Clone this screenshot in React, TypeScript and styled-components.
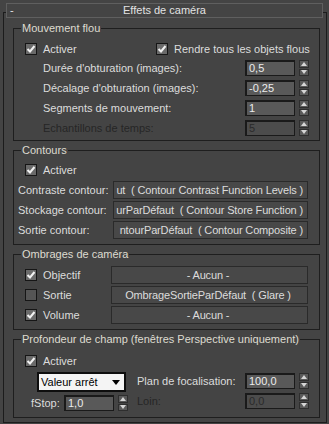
import React from "react";
import styled, { createGlobalStyle } from "styled-components";

const GlobalStyle = createGlobalStyle`
  html, body {
    margin: 0;
    padding: 0;
    background: #444444;
  }
  body {
    font-family: "Liberation Sans", Arial, sans-serif;
    font-size: 11px;
    color: #dcdcdc;
  }
`;

const Check: React.FC<{ checked?: boolean }> = ({ checked }) => (
  <CheckBox $checked={checked}>
    {checked && (
      <svg width="10" height="10" viewBox="0 0 10 10">
        <polyline points="1.5,5 4,7.5 8.5,2" fill="none" stroke="#f2f2f2" strokeWidth="2" />
      </svg>
    )}
  </CheckBox>
);

const Spinner: React.FC = () => (
  <SpinBox>
    <SpinHalf>
      <svg width="6" height="4" viewBox="0 0 6 4">
        <polygon points="0,4 6,4 3,0" fill="#d6d6d6" />
      </svg>
    </SpinHalf>
    <SpinHalf>
      <svg width="6" height="4" viewBox="0 0 6 4">
        <polygon points="0,0 6,0 3,4" fill="#d6d6d6" />
      </svg>
    </SpinHalf>
  </SpinBox>
);

const SpinField: React.FC<{ value: string; disabled?: boolean }> = ({ value, disabled }) => (
  <>
    <NumField $disabled={disabled}>{value}</NumField>
    <Spinner />
  </>
);

const App: React.FC = () => {
  return (
    <Page>
      <GlobalStyle />
      <Frame>
        <Header>
          <Collapse>-</Collapse>
          <span>Effets de caméra</span>
          <span />
        </Header>

        <Group $top={3}>
          <Legend>Mouvement flou</Legend>
          <GroupBody $top={4} $bottom={2}>
            <CheckRow $h={19}>
              <CheckItem $w={131}>
                <Check checked />
                Activer
              </CheckItem>
              <CheckItem>
                <Check checked />
                Rendre tous les objets flous
              </CheckItem>
            </CheckRow>
            <SpinRow>
              <Label>Durée d'obturation (images):</Label>
              <SpinField value="0,5" />
            </SpinRow>
            <SpinRow>
              <Label>Décalage d'obturation (images):</Label>
              <SpinField value="-0,25" />
            </SpinRow>
            <SpinRow>
              <Label>Segments de mouvement:</Label>
              <SpinField value="1" />
            </SpinRow>
            <SpinRow>
              <Label $disabled>Echantillons de temps:</Label>
              <SpinField value="5" disabled />
            </SpinRow>
          </GroupBody>
        </Group>

        <Group $top={2}>
          <Legend>Contours</Legend>
          <GroupBody $top={3} $bottom={4}>
            <CheckRow $h={20}>
              <CheckItem>
                <Check checked />
                Activer
              </CheckItem>
            </CheckRow>
            <MapRow $left={4}>
              <MapLabel $w={95}>Contraste contour:</MapLabel>
              <MapButton $align="flex-end">ut  ( Contour Contrast Function Levels )</MapButton>
            </MapRow>
            <MapRow $left={4}>
              <MapLabel $w={95}>Stockage contour:</MapLabel>
              <MapButton $align="flex-end">urParDéfaut  ( Contour Store Function )</MapButton>
            </MapRow>
            <MapRow $left={4}>
              <MapLabel $w={95}>Sortie contour:</MapLabel>
              <MapButton $align="flex-end">ntourParDéfaut  ( Contour Composite )</MapButton>
            </MapRow>
          </GroupBody>
        </Group>

        <Group $top={2}>
          <Legend>Ombrages de caméra</Legend>
          <GroupBody $top={4} $bottom={4}>
            <MapRow $left={11}>
              <CheckItem $w={86}>
                <Check checked />
                Objectif
              </CheckItem>
              <MapButton $align="center">- Aucun -</MapButton>
            </MapRow>
            <MapRow $left={11}>
              <CheckItem $w={86}>
                <Check />
                Sortie
              </CheckItem>
              <MapButton $align="center">OmbrageSortieParDéfaut  ( Glare )</MapButton>
            </MapRow>
            <MapRow $left={11}>
              <CheckItem $w={86}>
                <Check checked />
                Volume
              </CheckItem>
              <MapButton $align="center">- Aucun -</MapButton>
            </MapRow>
          </GroupBody>
        </Group>

        <Group $top={2}>
          <Legend>Profondeur de champ (fenêtres Perspective uniquement)</Legend>
          <GroupBody $top={5} $bottom={6}>
            <CheckRow $h={20}>
              <CheckItem>
                <Check checked />
                Activer
              </CheckItem>
            </CheckRow>
            <DofArea>
              <DofLeft>
                <Dropdown>
                  <span>Valeur arrêt</span>
                  <svg width="8" height="5" viewBox="0 0 8 5">
                    <polygon points="0,0 8,0 4,5" fill="#000" />
                  </svg>
                </Dropdown>
                <FieldRow $top={3}>
                  <SmallLabel>fStop:</SmallLabel>
                  <SpinField value="1,0" />
                </FieldRow>
              </DofLeft>
              <DofRight>
                <FieldRow $top={2}>
                  <Label>Plan de focalisation:</Label>
                  <SpinField value="100,0" />
                </FieldRow>
                <FieldRow $top={4}>
                  <Label $disabled>Loin:</Label>
                  <SpinField value="0,0" disabled />
                </FieldRow>
              </DofRight>
            </DofArea>
          </GroupBody>
        </Group>
      </Frame>
    </Page>
  );
};

export default App;

const Page = styled.div`
  width: 329px;
  height: 424px;
  padding-top: 12px;
  box-sizing: border-box;
  background: #444444;
  overflow: hidden;
`;

const Frame = styled.div`
  margin-left: 3px;
  width: 324px;
  box-sizing: border-box;
  border: 1px solid #1c1c1c;
  padding-bottom: 4px;
`;

const Header = styled.div`
  margin: -10px 3px 0 2px;
  height: 15px;
  box-sizing: border-box;
  border: 1px solid #5f5f5f;
  background: #444444;
  display: grid;
  grid-template-columns: 1fr auto 1fr;
  align-items: center;
  line-height: 13px;
  color: #e2e2e2;
`;

const Collapse = styled.span`
  padding-left: 3px;
`;

const Group = styled.fieldset<{ $top: number }>`
  margin: ${(p) => p.$top}px 6px 0 9px;
  padding: 0;
  border: 1px solid #1e1e1e;
  min-width: 0;
`;

const Legend = styled.legend`
  margin-left: 7px;
  padding: 0 1px;
  line-height: 14px;
  color: #dedbd0;
  white-space: nowrap;
`;

const GroupBody = styled.div<{ $top: number; $bottom: number }>`
  padding: ${(p) => p.$top}px 0 ${(p) => p.$bottom}px 0;
`;

const CheckRow = styled.div<{ $h: number }>`
  height: ${(p) => p.$h}px;
  display: flex;
  align-items: center;
  padding-left: 11px;
`;

const CheckItem = styled.div<{ $w?: number }>`
  display: flex;
  align-items: center;
  gap: 6px;
  flex: none;
  width: ${(p) => (p.$w ? `${p.$w}px` : "auto")};
  white-space: nowrap;
`;

const CheckBox = styled.span<{ $checked?: boolean }>`
  width: 12px;
  height: 12px;
  box-sizing: border-box;
  border: 1px solid #161616;
  background: ${(p) => (p.$checked ? "#6a6a6a" : "#555555")};
  display: flex;
  align-items: center;
  justify-content: center;
`;

const SpinRow = styled.div`
  height: 20px;
  display: flex;
  align-items: center;
  padding: 0 10px 0 29px;
`;

const Label = styled.span<{ $disabled?: boolean }>`
  flex: 1;
  white-space: nowrap;
  color: ${(p) => (p.$disabled ? "#262626" : "#dcdcdc")};
`;

const NumField = styled.div<{ $disabled?: boolean }>`
  width: 50px;
  height: 16px;
  box-sizing: border-box;
  border: 1px solid #1a1a1a;
  border-top-width: 2px;
  border-left-width: 2px;
  background: ${(p) => (p.$disabled ? "#4c4c4c" : "#595959")};
  color: ${(p) => (p.$disabled ? "#2a2a2a" : "#ececec")};
  padding-left: 2px;
  line-height: 13px;
  flex: none;
`;

const SpinBox = styled.div`
  margin-left: 4px;
  width: 10px;
  height: 16px;
  display: flex;
  flex-direction: column;
  gap: 1px;
  flex: none;
`;

const SpinHalf = styled.div`
  flex: 1;
  box-sizing: border-box;
  background: #5a5a5a;
  border: 1px solid #2e2e2e;
  display: flex;
  align-items: center;
  justify-content: center;
`;

const MapRow = styled.div<{ $left: number }>`
  height: 20px;
  display: flex;
  align-items: center;
  padding: 0 11px 0 ${(p) => p.$left}px;
`;

const MapLabel = styled.span<{ $w: number }>`
  width: ${(p) => p.$w}px;
  flex: none;
  white-space: nowrap;
`;

const MapButton = styled.div<{ $align: string }>`
  flex: 1;
  min-width: 0;
  height: 18px;
  box-sizing: border-box;
  border: 1px solid #2a2a2a;
  background: #484848;
  display: flex;
  align-items: center;
  justify-content: ${(p) => p.$align};
  overflow: hidden;
  white-space: pre;
  padding: 0 4px 0 1px;
  letter-spacing: -0.15px;
  color: #dcdcdc;
`;

const DofArea = styled.div`
  display: flex;
  align-items: flex-start;
`;

const DofLeft = styled.div`
  width: 123px;
  flex: none;
  padding-top: 1px;
`;

const DofRight = styled.div`
  flex: 1;
  padding-right: 10px;
`;

const Dropdown = styled.div`
  margin-left: 23px;
  width: 89px;
  height: 20px;
  box-sizing: border-box;
  border: 2px solid #0e0e0e;
  background: #f4f4f4;
  color: #000;
  display: flex;
  align-items: center;
  justify-content: space-between;
  padding: 0 4px 0 2px;
  font-size: 11px;
`;

const FieldRow = styled.div<{ $top: number }>`
  margin-top: ${(p) => p.$top}px;
  height: 16px;
  display: flex;
  align-items: center;
`;

const SmallLabel = styled.span`
  width: 33px;
  padding-left: 17px;
  flex: none;
  white-space: nowrap;
`;
